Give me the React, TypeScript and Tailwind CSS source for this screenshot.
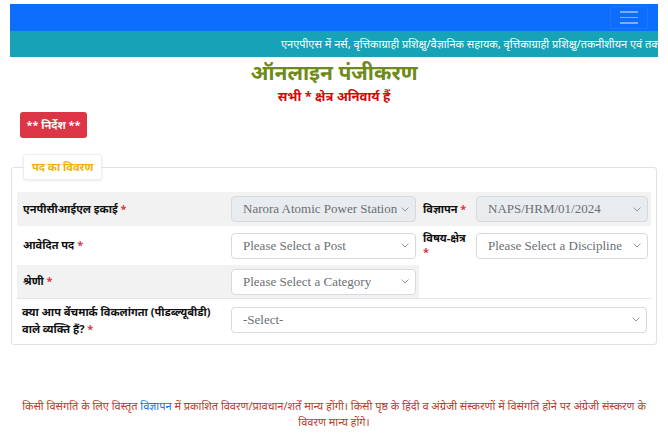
import React from "react";

const Chevron = () => (
  <svg width="8" height="5" viewBox="0 0 8 5" className="shrink-0">
    <path d="M0.5 0.5 L4 4 L7.5 0.5" fill="none" stroke="#8a8f94" strokeWidth="0.9" />
  </svg>
);

function Sel({ text, disabled, className }: { text: string; disabled?: boolean; className: string }) {
  return (
    <div
      className={
        "h-[26px] shrink-0 flex items-center justify-between pl-[11px] pr-[6px] border border-[#d6dadf] rounded-[4px] " +
        (disabled ? "bg-[#e9ecef] " : "bg-white ") +
        className
      }
    >
      <span className="text-[13px] text-[#6b6f73] whitespace-nowrap overflow-hidden [font-family:'Liberation_Serif','DejaVu_Serif',serif]">
        {text}
      </span>
      <Chevron />
    </div>
  );
}

const Star = () => <span className="text-[#dc3545]"> *</span>;

export default function App() {
  return (
    <div className="w-[668px] h-[442px] bg-white overflow-hidden [font-family:'Noto_Sans','Noto_Sans_Devanagari',sans-serif]">
      <div className="mx-[10px] pt-[4px]">
        <div className="h-[27px] bg-[#0d6efd] flex items-center justify-end pr-[10px]">
          <div className="w-[38px] h-[23px] border border-[#1f78fc] rounded-[3px] flex flex-col items-center justify-center gap-[4px]">
            <div className="w-[18px] h-[1.5px] bg-[#7fadf6]" />
            <div className="w-[18px] h-[1.5px] bg-[#7fadf6]" />
            <div className="w-[18px] h-[1.5px] bg-[#7fadf6]" />
          </div>
        </div>
        <div className="h-[26px] bg-[#17a2b8] flex items-center overflow-hidden pl-[271px]">
          <span className="text-white text-[11px] whitespace-nowrap">
            एनएपीएस में नर्स, वृत्तिकाग्राही प्रशिक्षु/वैज्ञानिक सहायक, वृत्तिकाग्राही प्रशिक्षु/तकनीशीयन एवं तकनीशियन पदों हेतु ऑनलाइन आवेदन
          </span>
        </div>
      </div>

      <div className="text-center mt-[1px] text-[21px] leading-[28px] font-bold text-[#6f8a1c]">ऑनलाइन पंजीकरण</div>
      <div className="text-center mt-[1px] text-[13px] leading-[18px] font-bold text-[#d20a0a]">सभी * क्षेत्र अनिवार्य हैं</div>

      <div className="pl-[20px] mt-[7px]">
        <div className="w-[67px] h-[26px] bg-[#dc3545] rounded-[3px] flex items-center justify-center text-white text-[11px] font-bold">
          ** निर्देश **
        </div>
      </div>

      <fieldset className="mx-[11px] mt-[16px] border border-[#dee2e6] rounded-[3px] pl-[5px] pr-[5px] pb-[4px]">
        <legend className="ml-[6px] px-[8px] h-[26px] flex items-center border border-[#eceef0] rounded-[3px] shadow-[0_1px_3px_rgba(0,0,0,0.08)] bg-white text-[#f0b400] text-[11px] font-bold">
          पद का विवरण
        </legend>
        <div className="pt-[12px]">
          <div className="flex items-center h-[34px] bg-[#f2f2f2]">
            <div className="w-[214px] shrink-0 pl-[6px] text-[11px] font-bold text-[#111]">
              एनपीसीआईएल इकाई<Star />
            </div>
            <Sel text="Narora Atomic Power Station" disabled className="w-[185px]" />
            <div className="w-[7px] shrink-0" />
            <div className="w-[53px] shrink-0 text-[11px] font-bold text-[#111] whitespace-nowrap">
              विज्ञापन<Star />
            </div>
            <Sel text="NAPS/HRM/01/2024" disabled className="w-[172px]" />
          </div>
          <div className="flex items-center h-[39px] bg-white">
            <div className="w-[214px] shrink-0 pl-[6px] text-[11px] font-bold text-[#111]">
              आवेदित पद<Star />
            </div>
            <Sel text="Please Select a Post" className="w-[185px]" />
            <div className="w-[7px] shrink-0" />
            <div className="w-[53px] shrink-0 self-start pt-[5px] text-[11px] leading-[14px] font-bold text-[#111] pr-[4px]">
              विषय-क्षेत्र <span className="text-[#dc3545]">*</span>
            </div>
            <Sel text="Please Select a Discipline" className="w-[172px]" />
          </div>
          <div className="flex h-[33px]">
            <div className="flex items-center w-[402px] bg-[#f2f2f2]">
              <div className="w-[214px] shrink-0 pl-[6px] text-[11px] font-bold text-[#111]">
                श्रेणी<Star />
              </div>
              <Sel text="Please Select a Category" className="w-[185px]" />
            </div>
          </div>
          <div className="flex items-center h-[42px] border-t border-[#e6e6e6]">
            <div className="w-[214px] shrink-0 pl-[5px] pr-[10px] text-[11px] leading-[17px] font-bold text-[#111]">
              क्या आप बेंचमार्क विकलांगता (पीडब्ल्यूबीडी) वाले व्यक्ति हैं?<Star />
            </div>
            <Sel text="-Select-" className="flex-1 mr-[4px]" />
          </div>
        </div>
      </fieldset>

      <div className="mt-[53px] px-[22px] text-center text-[11px] leading-[16px] text-[#c0392b]">
        किसी विसंगति के लिए विस्तृत <span className="text-[#0d6efd]">विज्ञापन</span> में प्रकाशित विवरण/प्रावधान/शर्तें मान्य होंगी। किसी पृष्ठ के हिंदी व अंग्रेजी संस्करणों में विसंगति होने पर अंग्रेजी संस्करण के विवरण मान्य होंगे।
      </div>
    </div>
  );
}
